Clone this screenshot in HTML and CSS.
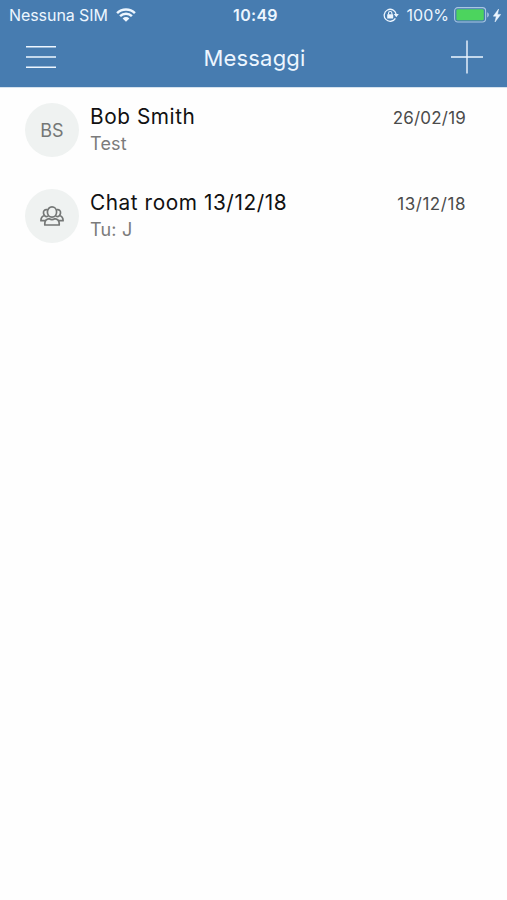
FILE: index.html
```html
<!DOCTYPE html>
<html lang="it">
<head>
<meta charset="utf-8">
<title>Messaggi</title>
<link rel="stylesheet" href="styles.css">
</head>
<body>
<header class="top">
  <div class="status">
    <div class="status-left">
      <span class="carrier">Nessuna SIM</span>
      <svg class="wifi" viewBox="0 0 20 14" width="20" height="14">
        <path d="M1.1 5.2a12.6 12.6 0 0 1 17.8 0M4.1 8.2a8.4 8.4 0 0 1 11.8 0" fill="none" stroke="currentColor" stroke-width="2.5"/>
        <path d="M6.6 10.4a4.9 4.9 0 0 1 6.8 0L10 13.8z" fill="currentColor"/>
      </svg>
    </div>
    <span class="clock">10:49</span>
    <div class="status-right">
      <svg class="lock" viewBox="0 0 16 14" width="16" height="14">
        <path d="M12.4 10.3a6 6 0 1 1 .7-4.2" fill="none" stroke="currentColor" stroke-width="1.3"/>
        <path d="M10.8 6h5l-2.5 3.2z" fill="currentColor"/>
        <rect x="4.2" y="6.2" width="6" height="4.2" rx=".5" fill="currentColor"/>
        <path d="M5.5 6.5V5.2a1.7 1.7 0 0 1 3.4 0v1.3" fill="none" stroke="currentColor" stroke-width="1.1"/>
      </svg>
      <span class="percent">100%</span>
      <svg class="battery" viewBox="0 0 36 16" width="36" height="16">
        <rect x=".6" y=".6" width="31" height="14.4" rx="3.2" fill="none" stroke="#a9c6e2" stroke-width="1.1"/>
        <rect x="2.4" y="2.3" width="27.4" height="11" rx="1.4" fill="#4cd45e"/>
        <path d="M33.2 5.2c2.2 1 2.2 4.2 0 5.2z" fill="#a9c6e2"/>
      </svg>
      <svg class="bolt" viewBox="0 0 8 13" width="8" height="13">
        <path d="M5.600 0L.3 7.200h3L2 13l5.700-7.600H4.500z" fill="currentColor" stroke="currentColor" stroke-width=".5"/>
      </svg>
    </div>
  </div>
  <nav class="nav">
    <svg class="menu" viewBox="0 0 30 24" width="30" height="24">
      <path d="M0 1.700h30M0 12h30M0 22.200h30" stroke="currentColor" stroke-width="1.400"/>
    </svg>
    <h1 class="title">Messaggi</h1>
    <svg class="plus" viewBox="0 0 32 34" width="32" height="34">
      <path d="M0 17h32M16 .500v33" stroke="currentColor" stroke-width="1.400"/>
    </svg>
  </nav>
</header>
<main class="list">
  <article class="chat">
    <div class="avatar"><span class="initials">BS</span></div>
    <div class="body">
      <div class="name">Bob Smith</div>
      <div class="preview">Test</div>
    </div>
    <time class="date">26/02/19</time>
  </article>
  <article class="chat">
    <div class="avatar">
      <svg class="group" viewBox="0 0 24 20" width="24" height="20">
        <g fill="none" stroke="currentColor" stroke-width="1.700" stroke-linejoin="round" stroke-linecap="round">
          <ellipse cx="12" cy="6" rx="4.600" ry="5.100"/>
          <path d="M4.800 19v-1.500c0-3 1.300-4.300 4.400-4.800 1.700 1.100 3.900 1.100 5.600 0 3.100.5 4.400 1.800 4.400 4.800V19z"/>
          <path d="M6.800 3.600C4.600 3.400 3.200 5 3.500 7.100c.1 1 .5 1.800 1.100 2.400C2 10 .9 11.500.9 14.700h3.900M4.800 9.800c1 .9 2 .9 3 .4"/>
          <path d="M17.200 3.600c2.200-.2 3.600 1.400 3.300 3.500-.1 1-.5 1.800-1.100 2.400 2.600.5 3.700 2 3.700 5.200h-3.900M19.200 9.800c-1 .9-2 .9-3 .4"/>
        </g>
      </svg>
    </div>
    <div class="body">
      <div class="name">Chat room 13/12/18</div>
      <div class="preview">Tu: J</div>
    </div>
    <time class="date date-wide">13/12/18</time>
  </article>
</main>
</body>
</html>
```
FILE: styles.css
```css
* { box-sizing: border-box; }
body {
  margin: 0;
  min-height: 900px;
  background: #fefefe;
  color: #111;
  font-family: Inter, "Liberation Sans", sans-serif;
}
svg { display: block; flex: none; }
.top {
  height: 87px;
  background: #477cb0;
  color: #edf6ff;
  box-shadow: 0 1px 0 #d5e2ee;
}
.status {
  display: grid;
  grid-template-columns: 1fr auto 1fr;
  align-items: center;
  height: 30px;
  padding: 0 6px 0 9px;
  font-size: 16px;
  line-height: 20px;
  white-space: nowrap;
}
.status-left, .status-right { display: flex; align-items: center; }
.status-right { justify-content: flex-end; }
.carrier { letter-spacing: -0.07px; }
.wifi { margin-left: 8px; }
.clock { padding-left: 1px; font-weight: 600; letter-spacing: 0.3px; }
.percent { margin: 0 5px 0 8px; }
.battery { margin-left: 0; }
.bolt { margin-left: 3px; }
.nav {
  display: grid;
  grid-template-columns: 1fr auto 1fr;
  align-items: center;
  height: 54px;
  padding: 0 24px 0 26px;
}
.title { margin: 2px 0 0; font-size: 22px; line-height: 28px; font-weight: 400; letter-spacing: 0.2px; }
.plus { justify-self: end; }
.list { padding-top: 1px; }
.chat {
  display: flex;
  height: 86px;
  padding: 15px 41px 0 25px;
}
.avatar {
  display: flex;
  flex: none;
  align-items: center;
  justify-content: center;
  width: 54px;
  height: 54px;
  border-radius: 50%;
  background: #eff2f1;
  color: #747776;
}
.initials { font-size: 18px; }
.body { flex: 1; margin-left: 11px; white-space: nowrap; }
.name { font-size: 20.800px; line-height: 27px; letter-spacing: 0.56px; }
.preview { font-size: 18px; line-height: 28px; letter-spacing: 0.2px; color: #7b7b7b; }
.date { font-size: 17px; line-height: 30px; letter-spacing: 0.2px; color: #4b4b4b; }
.date-wide { letter-spacing: 0.55px; }
```
